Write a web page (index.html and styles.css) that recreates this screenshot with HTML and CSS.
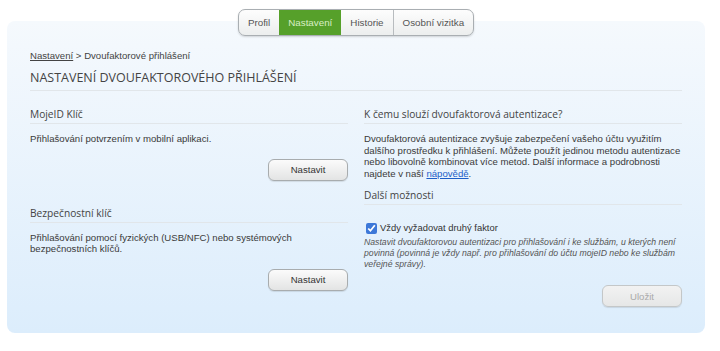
FILE: index.html
```html
<!DOCTYPE html>
<html lang="cs">
<head>
  <meta charset="UTF-8">
  <meta name="viewport" content="width=device-width, initial-scale=1.0">
  <title>Nastavení dvoufaktorového přihlášení</title>
  <link rel="stylesheet" href="styles.css">
</head>
<body>
  <div class="page">
    <nav class="tabs">
      <a href="#" class="tab">Profil</a>
      <a href="#" class="tab active">Nastavení</a>
      <a href="#" class="tab">Historie</a>
      <a href="#" class="tab">Osobní vizitka</a>
    </nav>

    <div class="panel">
      <div class="breadcrumb"><a href="#">Nastavení</a> &gt; Dvoufaktorové přihlášení</div>
      <h1>NASTAVENÍ DVOUFAKTOROVÉHO PŘIHLÁŠENÍ</h1>

      <div class="columns">
        <div class="col">
          <section class="block">
            <h2>MojeID Klíč</h2>
            <p class="desc">Přihlašování potvrzením v mobilní aplikaci.</p>
            <div class="actions"><button class="btn">Nastavit</button></div>
          </section>
          <section class="block second">
            <h2>Bezpečnostní klíč</h2>
            <p class="desc">Přihlašování pomocí fyzických (USB/NFC) nebo systémových<br>bezpečnostních klíčů.</p>
            <div class="actions"><button class="btn">Nastavit</button></div>
          </section>
        </div>

        <div class="col">
          <section class="block">
            <h2>K čemu slouží dvoufaktorová autentizace?</h2>
            <p class="desc">Dvoufaktorová autentizace zvyšuje zabezpečení vašeho účtu využitím dalšího prostředku k přihlášení. Můžete použít jedinou metodu autentizace nebo libovolně kombinovat více metod. Další informace a podrobnosti najdete v naší <a href="#" class="help">nápovědě</a>.</p>
          </section>
          <section class="block">
            <h2>Další možnosti</h2>
            <label class="check"><input type="checkbox" checked> Vždy vyžadovat druhý faktor</label>
            <p class="note">Nastavit dvoufaktorovou autentizaci pro přihlašování i ke službám, u kterých není povinná (povinná je vždy např. pro přihlašování do účtu mojeID nebo ke službám veřejné správy).</p>
            <div class="actions save"><button class="btn" disabled>Uložit</button></div>
          </section>
        </div>
      </div>
    </div>
  </div>
</body>
</html>
```

FILE: styles.css
```css
body {
  margin: 0;
  background: #fff;
  font-family: "Liberation Sans", Arial, sans-serif;
  font-size: 9.6px;
  color: #333;
}

.page {
  width: 698px;
  margin-left: 7px;
  padding-top: 9px;
}

/* horní záložky */
.tabs {
  position: relative;
  z-index: 1;
  display: flex;
  width: max-content;
  margin: 0 auto;
  border: 1px solid #a9aeb2;
  border-radius: 7px;
  background: linear-gradient(#fdfdfd, #eceeee);
  box-shadow: 0 1px 2px rgba(0,0,0,0.15);
  overflow: hidden;
}

.tab {
  display: block;
  padding: 0 9px;
  font-size: 9.8px;
  line-height: 25px;
  color: #555;
  text-decoration: none;
  border-left: 1px solid #b8bcbf;
}

.tab:first-child {
  border-left: none;
}

.tab.active {
  background: #56a02a;
  color: #d9eec5;
  border-left: none;
}

.tab.active + .tab {
  border-left: none;
}

/* hlavní panel */
.panel {
  margin-top: -15px;
  height: 284px;
  padding: 28px 23px 0 23px;
  border-radius: 8px;
  background: linear-gradient(#f5f9fd, #dcedfc);
}

.breadcrumb {
  line-height: 14px;
  color: #444;
}

.breadcrumb a {
  color: #444;
}

h1 {
  margin: 6px 0 0 0;
  padding-bottom: 3px;
  font-family: "Open Sans", "DejaVu Sans", sans-serif;
  font-size: 12.5px;
  font-weight: normal;
  line-height: 18px;
  color: #444;
  border-bottom: 1px solid #e1e6ea;
}

.columns {
  display: flex;
  gap: 16px;
  margin-top: 16px;
}

.col {
  flex: 1;
}

h2 {
  margin: 0;
  padding-bottom: 1px;
  font-family: "Open Sans", "DejaVu Sans", sans-serif;
  font-size: 10.2px;
  font-weight: normal;
  line-height: 15px;
  color: #444;
  border-bottom: 1px solid #e1e6ea;
}

.desc {
  margin: 9px 0 0 0;
  line-height: 11.6px;
  color: #3a3a3a;
}

.help {
  color: #1c5ec8;
}

.actions {
  display: flex;
  justify-content: flex-end;
  margin-top: 14px;
}

.block + .block {
  margin-top: 9px;
}

.col .block.second {
  margin-top: 25px;
}

.btn {
  width: 80px;
  height: 22px;
  font-family: "Liberation Sans", Arial, sans-serif;
  font-size: 9.6px;
  color: #333;
  border: 1px solid #a8acae;
  border-radius: 6px;
  background: linear-gradient(#fbfbfb, #e3e4e4);
  box-shadow: 0 1px 1px rgba(0,0,0,0.1);
}

.btn:disabled {
  color: #aaa;
  border-color: #c4c7c8;
  background: linear-gradient(#f2f2f2, #e6e7e7);
}

.check {
  display: flex;
  align-items: center;
  gap: 3px;
  margin-top: 16px;
  font-size: 9.4px;
  line-height: 14px;
  color: #333;
}

.check input {
  width: 11px;
  height: 11px;
  margin: 0 0 0 2px;
  accent-color: #3d78d8;
}

.note {
  margin: 2px 0 0 0;
  font-size: 8.7px;
  font-style: italic;
  line-height: 11px;
  color: #555;
}

.actions.save {
  margin-top: 15px;
}
```
